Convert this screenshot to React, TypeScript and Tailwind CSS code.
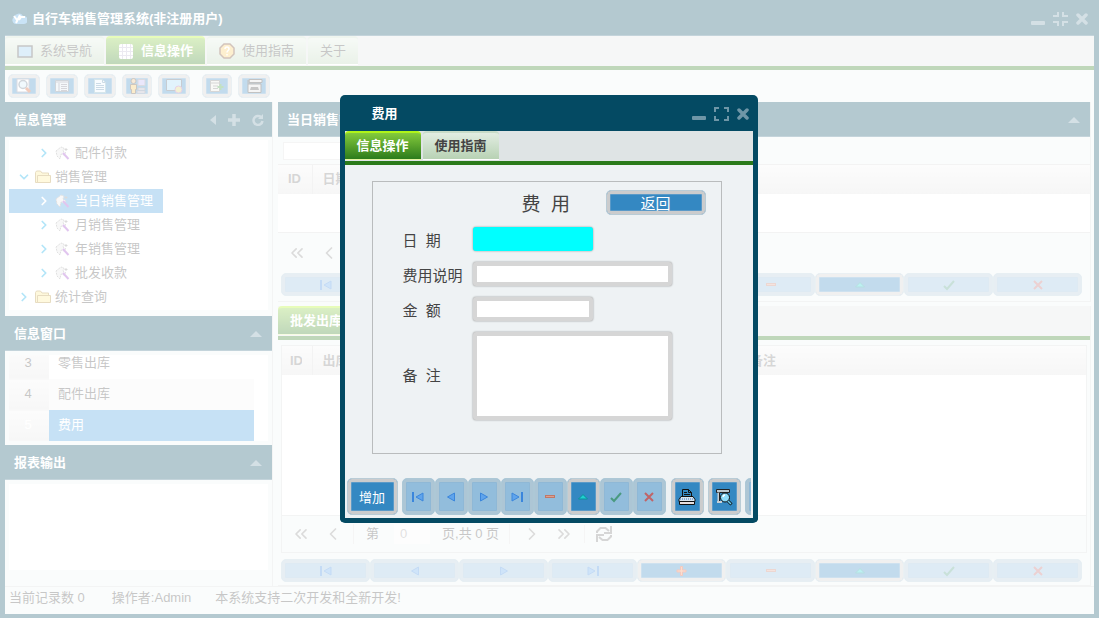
import React from 'react';
import { ChevronDown, ChevronLeft, ChevronRight, ChevronsLeft, ChevronsRight } from 'lucide-react';
import clsx from 'clsx';

type NavKind = 'first' | 'prev' | 'next' | 'last' | 'add' | 'remove' | 'edit' | 'save' | 'cancel';

const NAV_LABELS: Record<NavKind, string> = {
  first: '首条',
  prev: '上一条',
  next: '下一条',
  last: '末条',
  add: '增加',
  remove: '删除',
  edit: '修改',
  save: '保存',
  cancel: '取消',
};

const DIALOG_NAV: NavKind[] = ['first', 'prev', 'next', 'last', 'remove', 'edit', 'save', 'cancel'];
const GRID_NAV: NavKind[] = ['first', 'prev', 'next', 'last', 'add', 'remove', 'edit', 'save', 'cancel'];

const NavIcon = ({ kind }: { kind: NavKind }) => (
  <svg width="14" height="14" viewBox="0 0 14 14" aria-hidden="true">
    {kind === 'first' && (
      <>
        <rect x="1" y="2" width="2" height="10" fill="#3b86dc" />
        <path d="M12 3v8L5 7z" fill="#5fa4ec" stroke="#3b86dc" />
      </>
    )}
    {kind === 'prev' && <path d="M10.5 3v8L3.500 7z" fill="#5fa4ec" stroke="#3b86dc" />}
    {kind === 'next' && <path d="M3.500 3v8L10.500 7z" fill="#5fa4ec" stroke="#3b86dc" />}
    {kind === 'last' && (
      <>
        <path d="M2 3v8L9 7z" fill="#5fa4ec" stroke="#3b86dc" />
        <rect x="11" y="2" width="2" height="10" fill="#3b86dc" />
      </>
    )}
    {kind === 'add' && (
      <path d="M5.500 2.500h2v3.500h3.500v2h-3.500v3.500h-2v-3.500h-3.500v-2h3.500z" fill="#f09060" stroke="#d84a28" />
    )}
    {kind === 'remove' && <rect x="2.500" y="5.500" width="9" height="2" fill="#dca090" stroke="#c07868" />}
    {kind === 'edit' && <path d="M2.500 9L7 4.500 11.500 9z" fill="#1fd0d0" stroke="#0c8f9a" />}
    {kind === 'save' && <path d="M2 8l3 3L12 3" fill="none" stroke="#4a9a80" strokeWidth="2" />}
    {kind === 'cancel' && <path d="M3 3l8 8M11 3l-8 8" fill="none" stroke="#c06468" strokeWidth="2" />}
  </svg>
);

interface BlueButtonProps {
  label?: string;
  disabled?: boolean;
  className?: string;
  children: React.ReactNode;
}

const BlueButton = ({ label, disabled, className, children }: BlueButtonProps) => (
  <button
    type="button"
    aria-label={label}
    disabled={disabled}
    className={clsx(
      'flex shrink-0 items-center justify-center rounded-[5px] border text-white',
      disabled
        ? 'border-[#adc8d6] bg-[#92bddc] shadow-[inset_0_0_0_3px_#adc6d5,inset_0_0_0_4px_#8fb8d6]'
        : 'border-[#b9ccd6] bg-[#3488c2] shadow-[inset_0_0_0_3px_#cbcccd,inset_0_0_0_4px_#5b9ac8]',
      className,
    )}
  >
    {children}
  </button>
);

const GridNav = () => (
  <div className="mr-2 ml-[3px] flex">
    {GRID_NAV.map((kind) => (
      <BlueButton
        key={kind}
        label={NAV_LABELS[kind]}
        disabled={kind !== 'add' && kind !== 'edit'}
        className="h-[23px] flex-1"
      >
        <NavIcon kind={kind} />
      </BlueButton>
    ))}
  </div>
);

const CollapseIcon = () => (
  <svg width="12" height="6" viewBox="0 0 12 6" aria-hidden="true">
    <path d="M6 0l6 6H0z" fill="#6f96a7" />
  </svg>
);

const PanelHeader = ({ title, children }: { title: string; children?: React.ReactNode }) => (
  <div className="flex h-[35px] shrink-0 items-center justify-between border-b border-[#3a7186] bg-[#044a63] pr-2.5 pl-[9px] pt-0.5">
    <h2 className="font-bold text-white">{title}</h2>
    {children ?? (
      <button type="button" aria-label="折叠">
        <CollapseIcon />
      </button>
    )}
  </div>
);

const WindowButtons = ({ maximized }: { maximized?: boolean }) => (
  <div className="flex items-center gap-2 text-[#6f96a7]">
    <button type="button" aria-label="最小化">
      <svg width="14" height="14" viewBox="0 0 14 14" fill="currentColor">
        <rect y="9" width="14" height="4" rx="1" />
      </svg>
    </button>
    <button type="button" aria-label={maximized ? '还原' : '最大化'}>
      <svg width="15" height="14" viewBox="0 0 15 14" fill="none" stroke="currentColor" strokeWidth="2">
        {maximized ? (
          <path d="M5 0v4H0M10 0v4h5M5 14v-4H0M10 14v-4h5" />
        ) : (
          <path d="M1 5V1h4M10 1h4v4M1 9v4h4M10 13h4V9" />
        )}
      </svg>
    </button>
    <button type="button" aria-label="关闭">
      <svg width="12" height="12" viewBox="0 0 12 12" stroke="currentColor" strokeWidth="3.500" strokeLinecap="round">
        <path d="M2 2l8 8M10 2l-8 8" />
      </svg>
    </button>
  </div>
);

interface TabProps {
  active?: boolean;
  className?: string;
  children: React.ReactNode;
}

const Tab = ({ active, className, children }: TabProps) => (
  <button
    type="button"
    role="tab"
    aria-selected={!!active}
    className={clsx(
      'flex h-[29px] items-center gap-[7px] rounded-t border-t-2 border-b px-3 whitespace-nowrap',
      active
        ? 'border-t-[#b0f418] border-b-[#e4f5a0] bg-linear-to-b from-[#84cb3c] to-[#2b7c1c] font-bold text-white'
        : 'border-t-[#c8dcc8] border-b-white bg-linear-to-b from-[#e2ede2] to-[#b8d2b4] text-[#444]',
      className,
    )}
  >
    {children}
  </button>
);

const TabBar = ({ children }: { children: React.ReactNode }) => (
  <div role="tablist" className="flex h-[34px] shrink-0 gap-0.5 border-b-4 border-[#2a7a1a] bg-[#dfe4e5]">
    {children}
  </div>
);

const MagnifierPage = () => (
  <svg width="16" height="16" viewBox="0 0 16 16" aria-hidden="true">
    <path d="M1 1h12v13H1z" fill="#fff" stroke="#889" />
    <circle cx="7" cy="6.500" r="4" fill="#cfeaf8" stroke="#678" strokeWidth="1.500" />
    <path d="M10 10l4 4" stroke="#d05020" strokeWidth="3" />
  </svg>
);

const ListIcon = () => (
  <svg width="14" height="14" viewBox="0 0 14 14" aria-hidden="true">
    <path d="M.500 1.500h13v11H.500z" fill="#dce8ee" stroke="#678" />
    <path d="M1 3h12M4 4v8M6 5.500h6M6 7.500h6M6 9.500h6M6 11.500h6" stroke="#778" />
  </svg>
);

const DocIcon = () => (
  <svg width="14" height="16" viewBox="0 0 14 16" aria-hidden="true">
    <path d="M1.500 1.500h8l3 3v10h-11z" fill="#e8f6ff" stroke="#7ab" />
    <path d="M9.500 1.500v3h3M3 5.500h5M3 7.500h8M3 9.500h8M3 11.500h8" fill="none" stroke="#58a" />
  </svg>
);

const UserIcon = () => (
  <svg width="17" height="16" viewBox="0 0 17 16" aria-hidden="true">
    <circle cx="4.500" cy="3" r="2.500" fill="#e8b878" stroke="#543" />
    <path d="M1.500 6.500h6v5h-1v4h-4v-4h-1z" fill="#f0c050" stroke="#543" />
    <path d="M9 1.500h7v6H9z" fill="#b8b0f0" stroke="#889" />
    <path d="M9 10h7v2H9zM8 13h8v2H8z" fill="#dde" stroke="#778" />
  </svg>
);

const ScreenIcon = () => (
  <svg width="17" height="15" viewBox="0 0 17 15" aria-hidden="true">
    <path d="M.500.500h15v11H.500z" fill="#9fd6f4" stroke="#456" />
    <circle cx="12.500" cy="10.500" r="3.500" fill="#d8d070" stroke="#a6a" />
  </svg>
);

const ExportIcon = () => (
  <svg width="14" height="14" viewBox="0 0 14 14" aria-hidden="true">
    <path d="M.500 1.500h9v11h-9z" fill="#e8e8e0" stroke="#777" />
    <path d="M1 4h9M3 7h5M3 9.500h5" stroke="#777" />
    <path d="M10.500 5v6M7.500 8h6" stroke="#389a38" strokeWidth="2" />
  </svg>
);

const PrintAllIcon = () => (
  <svg width="17" height="16" viewBox="0 0 17 16" aria-hidden="true">
    <path d="M3 1.500h13v3H3zM2 6h13v8.500H2z" fill="#ddd" stroke="#333" />
    <path d="M5 9h7l1 3H4z" fill="#444" />
    <path d="M1 3h3M1 5h14" stroke="#333" />
  </svg>
);

const PrinterIcon = () => (
  <svg width="18" height="18" viewBox="0 0 18 18" aria-hidden="true">
    <path d="M4.500 8.500v-7h6l3 3v4" fill="#3488c2" stroke="#111" />
    <path d="M10.500 1.500v3h3M6 4.500h3M6 6.500h6" fill="none" stroke="#111" />
    <path d="M3 8.500h12l2 3v2H1v-2z" fill="#d8e4ee" stroke="#111" />
    <path d="M2 11h14" stroke="#3a78c8" strokeDasharray="1 1" />
    <path d="M1.500 13.500h15v3h-15z" fill="#e8e0e0" stroke="#111" />
  </svg>
);

const PreviewIcon = () => (
  <svg width="18" height="18" viewBox="0 0 18 18" aria-hidden="true">
    <path d="M1.500 1.500h13v3h-13z" fill="#bcc8d0" stroke="#222" />
    <path d="M3.500 4.500v9M2 14h5" fill="none" stroke="#c8d0d6" strokeWidth="2" />
    <path d="M4.500 5v8" stroke="#222" />
    <circle cx="10" cy="9.500" r="4.500" fill="#8fdcfa" stroke="#111" />
    <path d="M8 9a2.500 2.500 0 012-2" fill="none" stroke="#fff" strokeWidth="1.500" />
    <path d="M13 13l3.500 3.500" stroke="#111" strokeWidth="3" />
    <path d="M13 13l3 3" stroke="#6ad0f4" strokeWidth="1.500" />
  </svg>
);

const TOOLS = [
  { label: '查询', icon: <MagnifierPage />, className: 'w-8' },
  { label: '列表', icon: <ListIcon />, className: 'w-8' },
  { label: '文档', icon: <DocIcon />, className: 'w-8' },
  { label: '用户', icon: <UserIcon />, className: 'w-[30px]' },
  { label: '屏幕', icon: <ScreenIcon />, className: 'w-8' },
  { label: '导出', icon: <ExportIcon />, className: 'ml-1.5 w-[30px]' },
  { label: '打印', icon: <PrintAllIcon />, className: 'w-8' },
];

const WizardIcon = () => (
  <svg width="15" height="14" viewBox="0 0 15 14" aria-hidden="true">
    <path d="M1 5l5-4 3 1-1 3 3 2-2 2-3-1-1 5-3-3z" fill="#e6e6e6" stroke="#999" strokeDasharray="2 1" />
    <path d="M8 7l5.500 6" stroke="#9a3fc8" strokeWidth="2" />
    <path d="M11 2v3M9.500 3.500h3" stroke="#888" />
  </svg>
);

const FolderIcon = () => (
  <svg width="16" height="14" viewBox="0 0 16 14" aria-hidden="true">
    <path d="M.500 12.500v-10l1-1.500h4l1.500 2h6.500v9.500z" fill="#fbe68a" stroke="#b08a30" />
    <path d="M2.500 12.500v-7h13v7z" fill="#fdec90" stroke="#b08a30" />
  </svg>
);

const TREE = [
  { label: '配件付款', level: 2 },
  { label: '销售管理', level: 1, open: true },
  { label: '当日销售管理', level: 2, selected: true },
  { label: '月销售管理', level: 2 },
  { label: '年销售管理', level: 2 },
  { label: '批发收款', level: 2 },
  { label: '统计查询', level: 1 },
];

const WINDOWS = [
  { id: 3, name: '零售出库' },
  { id: 4, name: '配件出库' },
  { id: 5, name: '费用', selected: true },
];

const Sidebar = () => (
  <aside className="flex w-[268px] shrink-0 flex-col border-r border-[#d6dadb]">
    <PanelHeader title="信息管理">
      <div className="-mr-0.5 flex items-center gap-3 text-[#6f96a7]">
        <button type="button" aria-label="收起">
          <svg width="6" height="10" viewBox="0 0 6 10" fill="currentColor">
            <path d="M6 0v10L0 5z" />
          </svg>
        </button>
        <button type="button" aria-label="添加">
          <svg width="12" height="12" viewBox="0 0 12 12" stroke="currentColor" strokeWidth="3.500">
            <path d="M6 0v12M0 6h12" />
          </svg>
        </button>
        <button type="button" aria-label="刷新">
          <svg width="12" height="12" viewBox="0 0 12 12" fill="none" stroke="currentColor" strokeWidth="2.500">
            <path d="M9 3a4.500 4.500 0 101.500 4" />
            <path d="M11 0v5H6z" fill="currentColor" stroke="none" />
          </svg>
        </button>
      </div>
    </PanelHeader>
    <div className="px-1 pt-[3px] pb-1.5">
      <ul className="h-[170px] overflow-hidden bg-white pt-px">
        {TREE.map((node) => (
          <li key={node.label}>
            <button
              type="button"
              className={clsx(
                'flex h-6 items-center pr-2.5',
                node.level === 1 ? 'pl-2' : 'pl-7',
                node.selected ? 'bg-[#419bde] text-white' : 'text-[#444]',
              )}
            >
              {node.open ? (
                <ChevronDown className="mr-1 h-3.5 w-3.5 text-[#00a8e8]" strokeWidth={3} />
              ) : (
                <ChevronRight
                  className={clsx('mr-1 h-3.5 w-3.5', node.selected ? 'text-white' : 'text-[#00a8e8]')}
                  strokeWidth={3}
                />
              )}
              {node.level === 1 ? <FolderIcon /> : <WizardIcon />}
              <span className={node.level === 1 ? 'ml-1' : 'ml-[5px]'}>{node.label}</span>
            </button>
          </li>
        ))}
      </ul>
    </div>
    <PanelHeader title="信息窗口" />
    <div className="px-1 pt-1 pb-1">
      <div className="flex h-[86px] flex-col justify-end overflow-hidden bg-white pr-3.5">
        <table className="w-full border-collapse">
          <tbody>
            {WINDOWS.map((row) => (
              <tr
                key={row.id}
                className={clsx('h-[31px]', row.selected ? 'text-white' : 'text-[#444] even:bg-[#f6f6f6]')}
              >
                <td className="w-10 border-b border-[#e6e6e6] bg-linear-to-b from-[#f4f4f4] to-[#e4e4e4] pr-0.5 text-center">
                  {row.id}
                </td>
                <td className={clsx('px-[9px]', row.selected && 'bg-[#419bde]')}>{row.name}</td>
              </tr>
            ))}
          </tbody>
        </table>
      </div>
    </div>
    <PanelHeader title="报表输出" />
    <div className="flex flex-1 px-1 pt-1 pb-4">
      <div className="flex-1 bg-white" />
    </div>
  </aside>
);

const Pager = ({ id }: { id: string }) => (
  <div className="flex h-9 items-center text-[#444]">
    <button type="button" aria-label="首页" className="ml-[5px] px-1">
      <ChevronsLeft className="h-5 w-5 text-[#888]" />
    </button>
    <button type="button" aria-label="上一页" className="ml-1 px-1">
      <ChevronLeft className="h-5 w-5 text-[#888]" />
    </button>
    <label htmlFor={id} className="ml-1.5 border-l border-[#ddd] pl-3">
      第
    </label>
    <input id={id} defaultValue="0" className="mr-3 ml-[15px] h-5 w-9 bg-[#f8f8f8] pl-1.5 text-[#999]" />
    <span>页,共 0 页</span>
    <button type="button" aria-label="下一页" className="ml-2.5 border-l border-[#ddd] pr-1 pl-3">
      <ChevronRight className="h-5 w-5 text-[#888]" />
    </button>
    <button type="button" aria-label="末页" className="ml-1 px-1">
      <ChevronsRight className="h-5 w-5 text-[#888]" />
    </button>
    <button type="button" aria-label="刷新" className="ml-1.5 border-l border-[#ddd] pl-2.5">
      <svg width="18" height="18" viewBox="0 0 18 18" fill="none" stroke="#777" strokeWidth="2">
        <path d="M2 8V6.500L5.500 3h5L14 6M16 10v1.500L12.500 15h-5L4 12" />
        <path d="M16 1v7H9M2 17v-7h7" />
      </svg>
    </button>
  </div>
);

const headRow = 'h-[29px] bg-linear-to-b from-[#f4f4f4] to-[#e2e2e2] text-left text-[#777]';

const Workspace = () => (
  <main className="mr-[3px] flex min-w-0 flex-1 flex-col">
    <section className="border-r border-b border-[#d6dadb] pb-[5px]">
      <PanelHeader title="当日销售管理" />
      <div className="flex h-[27px] items-center px-[5px]">
        <input aria-label="查询" className="h-[18px] w-40 border border-[#ddd] bg-white px-1" />
      </div>
      <table className="w-full border-collapse border-y border-[#d6d6d6]">
        <thead>
          <tr className={headRow}>
            <th className="w-[34px] border-r border-[#d6d6d6] pl-2.5">ID</th>
            <th className="pl-2.5">日期</th>
          </tr>
        </thead>
        <tbody>
          <tr className="h-[39px] bg-white">
            <td />
            <td />
          </tr>
        </tbody>
      </table>
      <div className="pt-0.5 pb-0.5">
        <Pager id="sales-page" />
      </div>
      <GridNav />
    </section>
    <section className="mt-1 flex flex-1 flex-col border-r border-b border-[#d6dadb] pb-[3px]">
      <TabBar>
        <Tab active>批发出库</Tab>
      </TabBar>
      <div className="mx-[3px] mt-[5px] flex flex-1 flex-col border border-[#d6dadb]">
        <table className="w-full table-fixed border-collapse">
          <thead>
            <tr className={headRow}>
              <th className="w-[30px] border-r border-[#d6d6d6] pl-2">
                <div className="w-3 overflow-hidden">ID</div>
              </th>
              <th className="w-[428px] pl-2.5">出库日期</th>
              <th className="pl-2.5">备注</th>
            </tr>
          </thead>
        </table>
        <div className="flex-1 border-b border-[#d6dadb] bg-white" />
        <Pager id="stock-page" />
      </div>
      <div className="pt-1.5">
        <GridNav />
      </div>
    </section>
  </main>
);

const fieldClass =
  'rounded-[3px] border-4 border-[#d6d6d6] bg-white px-1 text-[#444] shadow-[0_0_2px_#888] outline-none';

const ExpenseDialog = () => (
  <div
    role="dialog"
    aria-labelledby="expense-title"
    className="flex w-[418px] flex-col overflow-hidden rounded-[5px] border-x-[5px] border-b-[5px] border-[#044a63] bg-[#eef2f4]"
  >
    <header className="flex h-9 items-center justify-between bg-[#044a63] pt-0.5 pr-1 pl-[27px]">
      <h2 id="expense-title" className="font-bold text-white">
        费用
      </h2>
      <WindowButtons />
    </header>
    <TabBar>
      <Tab active>信息操作</Tab>
      <Tab className="font-bold">使用指南</Tab>
    </TabBar>
    <form className="mt-4 mr-[31px] mb-6 ml-[27px] h-[273px] border border-[#b9bcbd] pt-2 text-[15px] text-[#444]">
      <div className="flex h-[25px] items-center justify-between pr-[15px] pl-[149px]">
        <h3 className="pt-1 text-[19px] whitespace-pre">费&nbsp; 用</h3>
        <BlueButton className="h-[25px] w-[100px] pt-0.5">返回</BlueButton>
      </div>
      <div className="mt-3 grid grid-cols-[70px_199px] items-center gap-y-[11px] pl-[30px]">
        <label htmlFor="expense-date" className="pt-1">
          日&nbsp; 期
        </label>
        <input id="expense-date" className="h-6 w-[120px] rounded-[3px] bg-[#0ff] px-1 shadow-[0_0_2px_#888]" />
        <label htmlFor="expense-desc" className="pt-1">
          费用说明
        </label>
        <input id="expense-desc" className={clsx('h-6', fieldClass)} />
        <label htmlFor="expense-amount" className="pt-1">
          金&nbsp; 额
        </label>
        <input id="expense-amount" className={clsx('h-6 w-[120px]', fieldClass)} />
        <label htmlFor="expense-note">备&nbsp; 注</label>
        <textarea id="expense-note" className={clsx('h-[88px] resize-none', fieldClass)} />
      </div>
    </form>
    <div className="mr-0.5 mb-[3px] ml-0.5 flex overflow-hidden">
      <BlueButton className="mr-1 h-[37px] w-[51px] pt-0.5">增加</BlueButton>
      {DIALOG_NAV.map((kind) => (
        <BlueButton key={kind} label={NAV_LABELS[kind]} disabled={kind !== 'edit'} className="h-[37px] w-[33px]">
          <NavIcon kind={kind} />
        </BlueButton>
      ))}
      <BlueButton label="打印" className="ml-[5px] h-[37px] w-[33px]">
        <PrinterIcon />
      </BlueButton>
      <BlueButton label="预览" className="ml-1 h-[37px] w-[33px]">
        <PreviewIcon />
      </BlueButton>
      <BlueButton label="更多" disabled className="ml-1 h-[37px] w-[33px]">
        <NavIcon kind="next" />
      </BlueButton>
    </div>
  </div>
);

export default function App() {
  return (
    <div className="font-['Liberation_Sans','Noto_Sans_CJK_SC',sans-serif] text-[13px] leading-5">
      <div className="flex h-screen flex-col border-x-[5px] border-b-4 border-[#044a63] bg-[#eef4f3]">
        <header className="flex h-9 shrink-0 items-center justify-between border-b border-[#3a7186] bg-[#044a63] px-1.5 pt-0.5">
          <div className="flex items-center gap-[5px] text-white">
            <svg width="16" height="14" viewBox="0 0 16 14" aria-hidden="true">
              <path d="M4 12a4 4 0 01-1-7 5 5 0 019-1 4 4 0 011 8z" fill="#4aa0e0" />
              <path d="M3 4l3 4M9 3l-4 8M8 8l2-3h4" fill="none" stroke="#fff" strokeWidth="2" />
            </svg>
            <h1 className="font-bold">自行车销售管理系统(非注册用户)</h1>
          </div>
          <WindowButtons maximized />
        </header>
        <TabBar>
          <Tab>
            <svg width="16" height="13" viewBox="0 0 16 13" aria-hidden="true">
              <path d="M1 1h14v11H1z" fill="#8fc8ee" stroke="#444" strokeWidth="1.500" />
            </svg>
            系统导航
          </Tab>
          <Tab active>
            <svg width="16" height="15" viewBox="0 0 16 15" aria-hidden="true">
              <rect x="1" width="14" height="15" rx="2" fill="#fff" />
              <path d="M4.500 0v15M8.500 0v15M12.500 0v15M1 3.500h14M1 7.500h14M1 11.500h14" stroke="#c0b8d0" />
            </svg>
            信息操作
          </Tab>
          <Tab>
            <svg width="16" height="16" viewBox="0 0 16 16" aria-hidden="true">
              <path d="M5 1h6l4 4v6l-4 4H5l-4-4V5z" fill="#f8c860" stroke="#6a3a20" strokeWidth="1.500" />
              <path d="M6 6a2 2 0 114 0c0 1.500-2 1.500-2 3.500M8 11v1.500" fill="none" stroke="#fff" strokeWidth="1.500" />
            </svg>
            使用指南
          </Tab>
          <Tab>关于</Tab>
        </TabBar>
        <div className="flex h-8 shrink-0 items-center gap-1.5 px-[3px]">
          {TOOLS.map((tool) => (
            <BlueButton key={tool.label} label={tool.label} className={clsx('h-6', tool.className)}>
              {tool.icon}
            </BlueButton>
          ))}
        </div>
        <div className="flex min-h-0 flex-1 gap-[5px]">
          <Sidebar />
          <Workspace />
        </div>
        <footer className="flex h-7 shrink-0 items-center gap-6 border-t border-[#d6dadb] px-1 pb-1.5 text-[#444]">
          <span className="pr-[3px]">当前记录数 0</span>
          <span>操作者:Admin</span>
          <span>本系统支持二次开发和全新开发!</span>
        </footer>
      </div>
      <div className="fixed inset-0 flex items-center justify-center bg-white/70 pr-0.5">
        <ExpenseDialog />
      </div>
    </div>
  );
}
